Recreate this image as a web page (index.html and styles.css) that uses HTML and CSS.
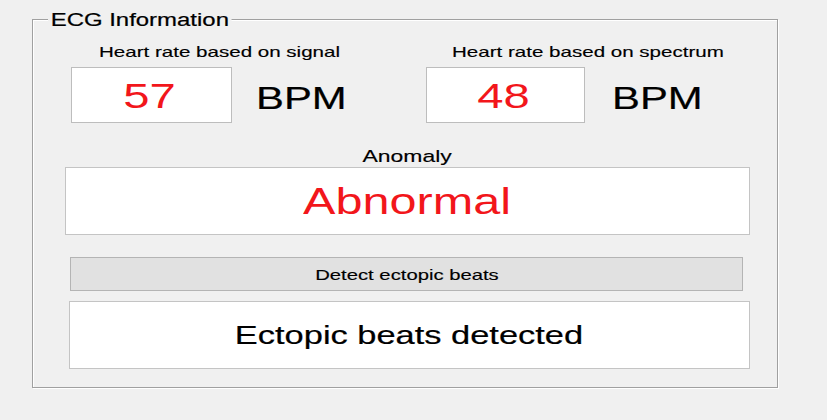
FILE: index.html
```html
<!DOCTYPE html>
<html>
<head>
<meta charset="utf-8">
<link rel="stylesheet" href="styles.css">
</head>
<body>
<div class="group">
  <span class="legend">ECG Information</span>
  <div class="rates">
    <div class="rate rate-signal">
      <div class="label"><span class="sx">Heart rate based on signal</span></div>
      <div class="rate-row">
        <div class="value-box box-signal"><span class="sxc value">57</span></div>
        <span class="sx unit">BPM</span>
      </div>
    </div>
    <div class="rate rate-spectrum">
      <div class="label"><span class="sx">Heart rate based on spectrum</span></div>
      <div class="rate-row">
        <div class="value-box box-spectrum"><span class="sxc value">48</span></div>
        <span class="sx unit">BPM</span>
      </div>
    </div>
  </div>
  <div class="anomaly-label"><span class="sxc">Anomaly</span></div>
  <div class="anomaly-box"><span class="sxc anomaly-text">Abnormal</span></div>
  <button class="detect-btn"><span class="sxc">Detect ectopic beats</span></button>
  <div class="result-box"><span class="sxc result-text">Ectopic beats detected</span></div>
</div>
</body>
</html>
```

FILE: styles.css
```css
html, body {
  margin: 0;
  padding: 0;
  background: #f0f0f0;
  font-family: "Liberation Sans", Arial, sans-serif;
  color: #000;
}
body {
  width: 827px;
  height: 420px;
  overflow: hidden;
  padding-top: 19px;
  box-sizing: border-box;
}
.sx {
  display: inline-block;
  transform: scaleX(1.35);
  transform-origin: left center;
  white-space: nowrap;
}
.sxc {
  display: inline-block;
  transform: scaleX(1.35);
  transform-origin: center center;
  white-space: nowrap;
}
.group {
  position: relative;
  margin-left: 32px;
  width: 746px;
  box-sizing: border-box;
  border: 1px solid #a0a0a0;
  box-shadow: 1px 1px 0 #ffffff, inset 1px 1px 0 #ffffff;
  padding-top: 23px;
  padding-bottom: 18px;
}
.legend {
  position: absolute;
  top: -10px;
  left: 15px;
  display: inline-block;
  padding: 0 2px;
  background: #f0f0f0;
  font-size: 18px;
  line-height: 20px;
  transform: scaleX(1.33);
  transform-origin: left center;
  white-space: nowrap;
  -webkit-text-stroke: 0.2px #000;
}
.rates {
  display: flex;
}
.rate-signal {
  margin-left: 38px;
  width: 355px;
}
.label {
  font-size: 15px;
  line-height: 18px;
  height: 18px;
  margin-bottom: 6px;
  -webkit-text-stroke: 0.15px #000;
}
.label .sx { transform: scaleX(1.37); }
.rate-signal .label { padding-left: 28px; }
.rate-spectrum .label { padding-left: 26px; }
.rate-row {
  display: flex;
  align-items: center;
}
.value-box {
  height: 56px;
  box-sizing: border-box;
  background: #fff;
  border: 1px solid #bdbdbd;
  display: flex;
  align-items: center;
  justify-content: center;
}
.box-signal { width: 161px; margin-right: 24px; }
.box-spectrum { width: 159px; margin-right: 27px; }
.value {
  color: #f2161b;
  font-size: 35px;
  line-height: 1;
  margin-right: 4px;
}
.unit {
  font-size: 31px;
  line-height: 1;
  margin-top: 6px;
  -webkit-text-stroke: 0.2px #000;
}
.anomaly-label {
  margin-top: 24px;
  height: 20px;
  font-size: 17px;
  line-height: 20px;
  text-align: center;
  margin-left: 32px;
  width: 685px;
  -webkit-text-stroke: 0.15px #000;
}
.anomaly-box {
  margin-left: 32px;
  width: 685px;
  height: 68px;
  box-sizing: border-box;
  background: #fff;
  border: 1px solid #c4c4c4;
  display: flex;
  align-items: center;
  justify-content: center;
}
.anomaly-text {
  color: #f2161b;
  font-size: 36px;
  line-height: 1;
  margin-top: 2px;
}
.detect-btn {
  display: flex;
  align-items: center;
  justify-content: center;
  margin: 22px 0 0 37px;
  width: 673px;
  height: 34px;
  box-sizing: border-box;
  background: #e1e1e1;
  border: 1px solid #b4b4b4;
  padding: 0;
  font-family: "Liberation Sans", Arial, sans-serif;
  font-size: 15px;
  line-height: 1;
  color: #000;
  -webkit-text-stroke: 0.15px #000;
}
.result-box {
  margin: 10px 0 0 36px;
  width: 681px;
  height: 68px;
  box-sizing: border-box;
  background: #fff;
  border: 1px solid #c4c4c4;
  display: flex;
  align-items: center;
  justify-content: center;
}
.result-text {
  font-size: 25.5px;
  line-height: 1;
  margin-top: 2px;
  -webkit-text-stroke: 0.2px #000;
}
```
